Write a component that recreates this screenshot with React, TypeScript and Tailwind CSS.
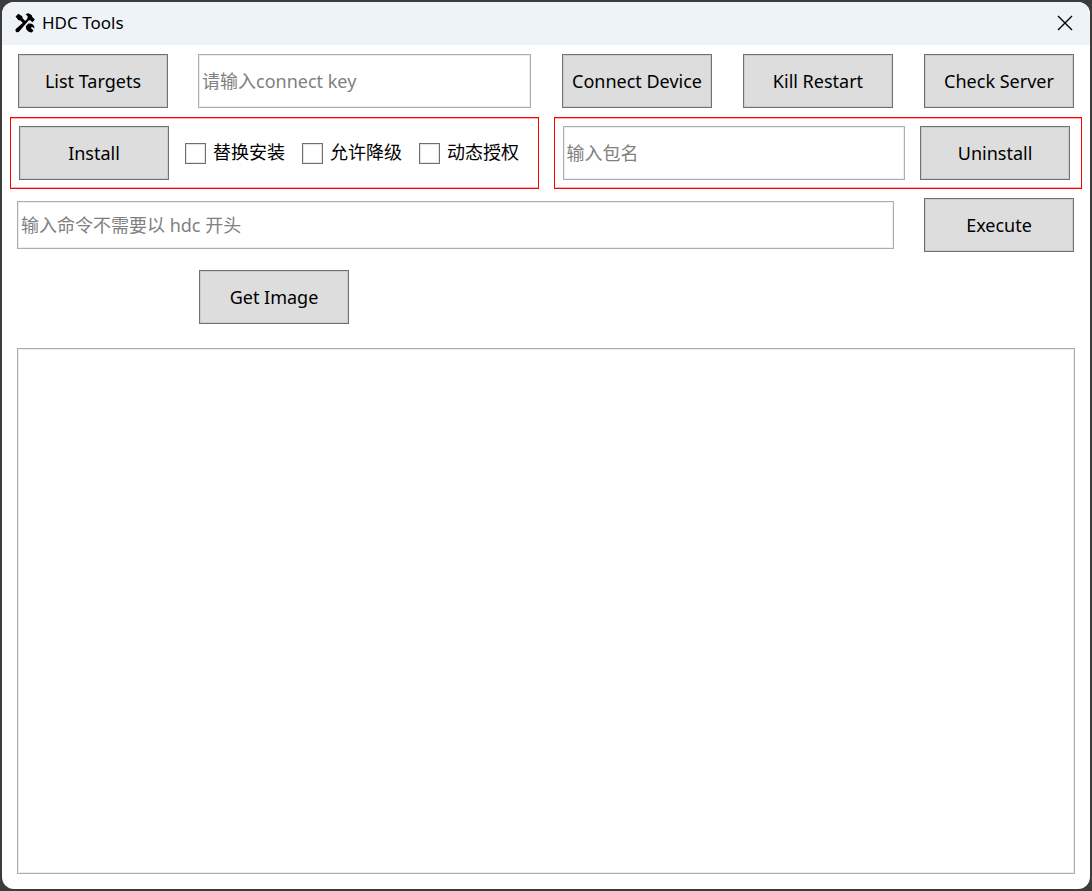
import type { ButtonHTMLAttributes, InputHTMLAttributes } from "react";

function ActionButton(props: ButtonHTMLAttributes<HTMLButtonElement>) {
  return (
    <button
      type="button"
      {...props}
      className="h-[54px] w-[150px] shrink-0 whitespace-nowrap border border-[#707070] bg-[#dddddd] text-lg text-black shadow-[inset_0_0_0_1px_#cccccc] hover:bg-[#bee6fd]"
    />
  );
}

function TextField(props: InputHTMLAttributes<HTMLInputElement> & { compact?: boolean }) {
  const { compact, ...rest } = props;
  return (
    <input
      type="text"
      {...rest}
      className={
        (compact ? "h-12" : "h-[54px]") +
        " min-w-0 flex-1 border border-[#abadb3] bg-white px-[3px] text-lg text-black shadow-[inset_0_0_0_1px_#eeeef2] outline-none placeholder:text-[#808080] placeholder:opacity-100"
      }
    />
  );
}

function CheckOption({ label }: { label: string }) {
  return (
    <label className="flex items-center gap-[7px] whitespace-nowrap text-lg text-black">
      <input
        type="checkbox"
        className="mt-0.5 size-[21px] shrink-0 appearance-none border border-[#707070] bg-white shadow-[inset_0_0_0_1px_#e4e4e4] checked:bg-[#707070]"
      />
      {label}
    </label>
  );
}

function ToolsIcon() {
  return (
    <svg viewBox="0 0 20 20" className="size-5" fill="black" aria-hidden="true">
      <path d="M.6 3.4 3.4 .7 7.2 3.2 7.8 5.6 11 8.8 8.9 10.9 5.6 7.7 3.2 7Z" />
      <path d="M10.6 1 13.6 .2 16.8 2.2 17.3 4 19.9 6.6 17.4 9.2 15.2 7.2 13.6 7.4 4.6 18Q3 20.2 1 18.8 -.4 17 1.6 15.2L12 6.2 12.8 3.6Z" />
      <path d="M10.8 13.2 13.4 10.6Q16.4 10.2 18.2 11.8 19.8 13.4 19.4 15.6L17 13.8 15.8 15 18.5 17.4 16.8 19.6Q13.8 19.4 12.2 17.6 10.7 15.8 10.8 13.2Z" />
    </svg>
  );
}

export default function App() {
  return (
    <div className="flex min-h-screen bg-[#3c3c3c] p-0.5 font-['Noto_Sans','Noto_Sans_CJK_SC',sans-serif]">
      <main className="flex flex-1 flex-col overflow-hidden rounded-xl bg-white">
        <header className="flex h-[43px] shrink-0 items-center justify-between bg-[#eef3f8] pr-[17px] pb-0.5 pl-[13px]">
          <div className="flex items-center gap-[7px]">
            <ToolsIcon />
            <h1 className="text-[17px] leading-6 text-black">HDC Tools</h1>
          </div>
          <button type="button" aria-label="Close" className="flex size-4 items-center justify-center">
            <svg viewBox="0 0 16 16" className="size-4" fill="none" stroke="black" strokeWidth="1.4" aria-hidden="true">
              <path d="M1 1 15 15M15 1 1 15" />
            </svg>
          </button>
        </header>

        <div className="flex flex-1 flex-col px-2 pt-[9px] pb-[15px]">
          <div className="flex gap-[31px] px-2">
            <div className="flex min-w-0 flex-1 gap-[30px]">
              <ActionButton>List Targets</ActionButton>
              <TextField placeholder="请输入connect key" aria-label="connect key" />
            </div>
            <ActionButton>Connect Device</ActionButton>
            <ActionButton>Kill Restart</ActionButton>
            <ActionButton>Check Server</ActionButton>
          </div>

          <div className="mt-[9px] grid grid-cols-2 gap-[15px]">
            <section className="flex h-[72px] items-center gap-4 border border-[#ff0000] pl-2 shadow-[inset_0_1px_#ffb0b0,inset_0_-1px_#ffb0b0]">
              <ActionButton>Install</ActionButton>
              <div className="flex gap-[17px] pb-0.5">
                <CheckOption label="替换安装" />
                <CheckOption label="允许降级" />
                <CheckOption label="动态授权" />
              </div>
            </section>
            <section className="flex h-[72px] items-center gap-[15px] border border-[#ff0000] pr-[11px] pl-2 shadow-[inset_0_1px_#ffb0b0,inset_0_-1px_#ffb0b0]">
              <TextField placeholder="输入包名" aria-label="包名" />
              <ActionButton>Uninstall</ActionButton>
            </section>
          </div>

          <div className="mt-[9px] flex items-center gap-[30px] pr-2 pl-[7px]">
            <TextField compact placeholder="输入命令不需要以 hdc 开头" aria-label="命令" />
            <ActionButton>Execute</ActionButton>
          </div>

          <div className="mt-[18px] flex pl-[189px]">
            <ActionButton>Get Image</ActionButton>
          </div>

          <div className="mt-6 flex flex-1 px-[7px]">
            <textarea
              readOnly
              aria-label="Output"
              className="flex-1 resize-none border border-[#abadb3] bg-white p-1 text-lg text-black shadow-[inset_0_0_0_1px_#eeeef2] outline-none"
            />
          </div>
        </div>
      </main>
    </div>
  );
}
